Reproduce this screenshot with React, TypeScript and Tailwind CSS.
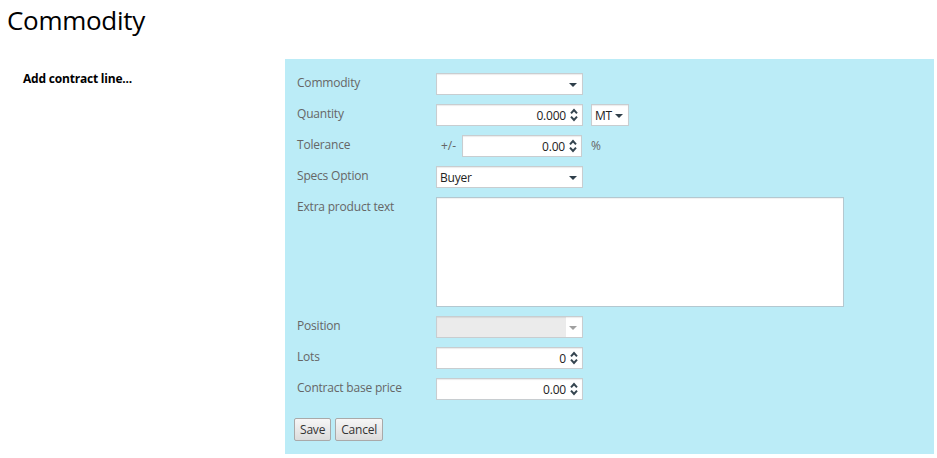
import React from 'react';

const Arrow = ({ disabled }: { disabled?: boolean }) => (
  <svg width="8" height="4" viewBox="0 0 8 4" className="absolute right-[5px] top-[9px]">
    <path d="M0 0 H8 L4 4 Z" fill={disabled ? '#a0a0a0' : '#2f3f4a'} />
  </svg>
);

const Spinner = () => (
  <svg width="8" height="16" viewBox="0 0 8 16" className="absolute right-[4px] top-[2px]">
    <path d="M1 6.3 L4 3 L7 6.3" fill="none" stroke="#34444f" strokeWidth="2" />
    <path d="M1 9.7 L4 13 L7 9.7" fill="none" stroke="#34444f" strokeWidth="2" />
  </svg>
);

const Select = ({ value = '', disabled = false, className = 'w-[147px]' }: { value?: string; disabled?: boolean; className?: string }) => (
  <div
    className={`relative h-[22px] border border-[#c8cdd0] shadow-[inset_0_1px_1px_rgba(0,0,0,0.08)] ${className} ${
      disabled ? 'bg-[linear-gradient(to_right,#ebebeb_calc(100%-16px),#ffffff_calc(100%-16px))]' : 'bg-white'
    }`}
  >
    <span className="block pl-[3px] pt-[1px] text-[12px] leading-[20px] tracking-[-0.2px] text-[#222]">{value}</span>
    <Arrow disabled={disabled} />
  </div>
);

const NumberInput = ({ value, className = 'w-[147px]' }: { value: string; className?: string }) => (
  <div className={`relative h-[22px] bg-white border border-[#c8cdd0] shadow-[inset_0_1px_1px_rgba(0,0,0,0.08)] ${className}`}>
    <span className="block pr-[16px] pt-[1px] text-right text-[12px] leading-[20px] tracking-[-0.2px] text-[#222]">{value}</span>
    <Spinner />
  </div>
);

const Row = ({ label, children }: { label: string; children: React.ReactNode }) => (
  <div className="flex items-start">
    <div className="w-[139px] shrink-0 pt-[2px] text-[12px] leading-4 tracking-[-0.2px] text-[#666]">{label}</div>
    {children}
  </div>
);

const Button = ({ children }: { children: React.ReactNode }) => (
  <button className="h-[23px] px-[5px] rounded-[2px] border border-[#a9a9a9] bg-gradient-to-b from-[#f6f6f6] to-[#dcdcdc] text-[12px] leading-[20px] tracking-[-0.2px] text-[#333]">
    {children}
  </button>
);

export default function App() {
  return (
    <div className="w-[937px] h-[458px] bg-white font-['Open_Sans',sans-serif] text-black">
      <h1 className="h-[59px] pl-[7px] pt-[3px] text-[26px] leading-[34px] tracking-[-0.3px]">Commodity</h1>
      <div className="flex">
        <div className="w-[285px] shrink-0 pl-[23px] pt-[12px] text-[12px] font-bold leading-4 tracking-[-0.2px]">Add contract line...</div>
        <div className="w-[649px] bg-[#bbecf7] pl-[12px] pt-[14px] pb-[13px] flex flex-col gap-[9px]">
          <Row label="Commodity">
            <Select />
          </Row>
          <Row label="Quantity">
            <NumberInput value="0.000" />
            <Select value="MT" className="ml-[8px] w-[38px]" />
          </Row>
          <Row label="Tolerance">
            <span className="w-[26px] pl-[5px] pt-[3px] text-[12px] leading-4 text-[#666]">+/-</span>
            <NumberInput value="0.00" className="w-[120px]" />
            <span className="pl-[9px] pt-[3px] text-[12px] leading-4 text-[#666]">%</span>
          </Row>
          <Row label="Specs Option">
            <Select value="Buyer" />
          </Row>
          <Row label="Extra product text">
            <div className="h-[110px] w-[408px] bg-white border border-[#b4c8d0] shadow-[inset_0_1px_1px_rgba(0,0,0,0.06)]" />
          </Row>
          <Row label="Position">
            <Select disabled />
          </Row>
          <Row label="Lots">
            <NumberInput value="0" />
          </Row>
          <Row label="Contract base price">
            <NumberInput value="0.00" />
          </Row>
          <div className="mt-[9px] -ml-[3px] flex gap-[4px]">
            <Button>Save</Button>
            <Button>Cancel</Button>
          </div>
        </div>
      </div>
    </div>
  );
}
